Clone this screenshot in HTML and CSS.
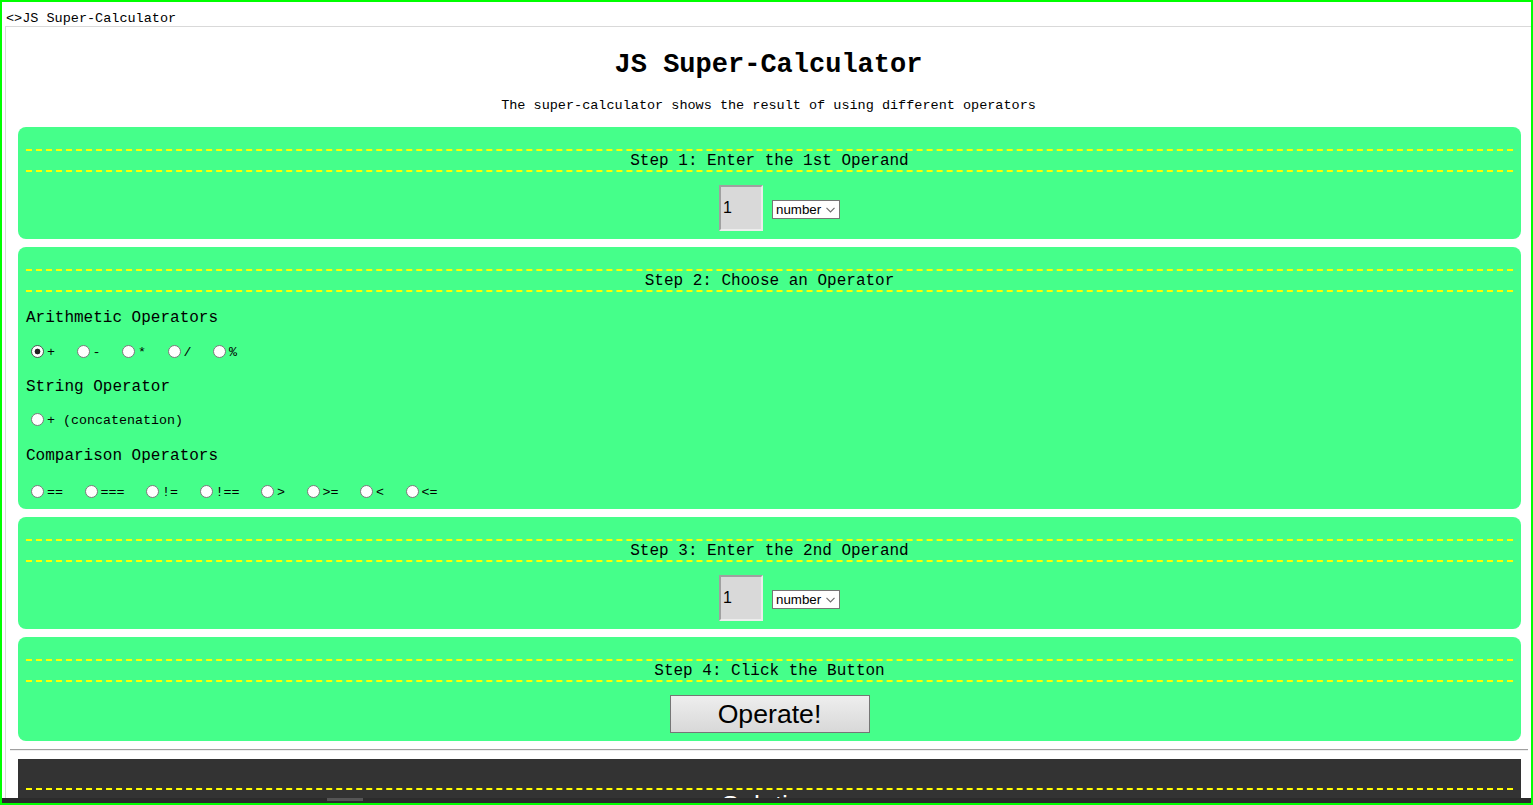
FILE: index.html
```html
<!DOCTYPE html>
<html>
<head>
<meta charset="utf-8">
<title>JS Super-Calculator</title>
<link rel="stylesheet" href="styles.css">
</head>
<body>
<div class="window">
  <div class="titlebar">&lt;&gt;JS Super-Calculator</div>
  <div class="frame">
    <h1 class="title">JS Super-Calculator</h1>
    <p class="subtitle">The super-calculator shows the result of using different operators</p>
    <div class="panels">
      <section class="panel">
        <h2 class="step-title">Step 1: Enter the 1st Operand</h2>
        <div class="operand-row">
          <input class="operand" type="text" value="1">
          <span class="select-wrap">
            <select class="type-select"><option>number</option><option>string</option></select>
            <svg class="chevron" width="9" height="6" viewBox="0 0 9 6"><path d="M0.5 0.8 L4.5 4.8 L8.5 0.8" fill="none" stroke="#6d6d6d" stroke-width="1.2"/></svg>
          </span>
        </div>
      </section>
      <section class="panel">
        <h2 class="step-title">Step 2: Choose an Operator</h2>
        <h3 class="group-title first">Arithmetic Operators</h3>
        <div class="radio-row row-1">
          <label class="opt"><input type="radio" name="op" checked><span>+</span></label>
          <label class="opt"><input type="radio" name="op"><span>-</span></label>
          <label class="opt"><input type="radio" name="op"><span>*</span></label>
          <label class="opt"><input type="radio" name="op"><span>/</span></label>
          <label class="opt"><input type="radio" name="op"><span>%</span></label>
        </div>
        <h3 class="group-title g2">String Operator</h3>
        <div class="radio-row row-2">
          <label class="opt"><input type="radio" name="op"><span>+ (concatenation)</span></label>
        </div>
        <h3 class="group-title g3">Comparison Operators</h3>
        <div class="radio-row row-3">
          <label class="opt"><input type="radio" name="op"><span>==</span></label>
          <label class="opt"><input type="radio" name="op"><span>===</span></label>
          <label class="opt"><input type="radio" name="op"><span>!=</span></label>
          <label class="opt"><input type="radio" name="op"><span>!==</span></label>
          <label class="opt"><input type="radio" name="op"><span>&gt;</span></label>
          <label class="opt"><input type="radio" name="op"><span>&gt;=</span></label>
          <label class="opt"><input type="radio" name="op"><span>&lt;</span></label>
          <label class="opt"><input type="radio" name="op"><span>&lt;=</span></label>
        </div>
      </section>
      <section class="panel">
        <h2 class="step-title">Step 3: Enter the 2nd Operand</h2>
        <div class="operand-row">
          <input class="operand" type="text" value="1">
          <span class="select-wrap">
            <select class="type-select"><option>number</option><option>string</option></select>
            <svg class="chevron" width="9" height="6" viewBox="0 0 9 6"><path d="M0.5 0.8 L4.5 4.8 L8.5 0.8" fill="none" stroke="#6d6d6d" stroke-width="1.2"/></svg>
          </span>
        </div>
      </section>
      <section class="panel">
        <h2 class="step-title">Step 4: Click the Button</h2>
        <div class="button-row">
          <button class="operate" type="button">Operate!</button>
        </div>
      </section>
    </div>
    <hr class="divider">
    <section class="output">
      <h2 class="output-title">Solution</h2>
    </section>
  </div>
  <div class="hscroll"><div class="hscroll-thumb"></div></div>
</div>
</body>
</html>
```
FILE: styles.css
```css
html, body {
  margin: 0;
  padding: 0;
  overflow: hidden;
  background: #fff;
}

.window {
  position: relative;
  width: 1533px;
  height: 805px;
  box-sizing: border-box;
  border: 2px solid #00ff00;
  overflow: hidden;
  background: #fff;
  font-family: "Courier New", "Nimbus Mono PS", "Nimbus Mono L", "FreeMono", "Liberation Mono", monospace;
  color: #000;
}

.titlebar {
  box-sizing: border-box;
  height: 24px;
  padding: 10px 0 0 4px;
  font-size: 13.5px;
  line-height: 14px;
  white-space: nowrap;
}

.frame {
  margin-left: 3px;
  border-top: 1px solid #d9d9d9;
  border-left: 1px solid #d9d9d9;
  height: 800px;
}

.title {
  margin: 23px 0 0;
  font-size: 27px;
  font-weight: bold;
  line-height: 31px;
  text-align: center;
}

.subtitle {
  margin: 17px 0 14px;
  font-size: 13.5px;
  line-height: 15px;
  text-align: center;
}

.panels {
  margin: 0 10px 0 12px;
  display: flex;
  flex-direction: column;
  gap: 8px;
}

.panel {
  background: #45ff8a;
  border-radius: 8px;
  padding: 22px 8px 8px;
}

.step-title {
  margin: 0;
  padding-top: 2px;
  border-top: 2px dashed #ffff00;
  border-bottom: 2px dashed #ffff00;
  font-size: 16px;
  font-weight: normal;
  line-height: 17px;
  text-align: center;
}

.operand-row {
  margin-top: 13px;
  display: flex;
  justify-content: center;
  align-items: center;
  gap: 9px;
  padding-left: 20px;
}

.operand {
  box-sizing: border-box;
  width: 44px;
  height: 46px;
  margin: 0;
  padding: 0 2px;
  border: 2px solid #a0a0a0;
  border-right-color: #ececec;
  border-bottom-color: #ececec;
  background: #d9d9d9;
  font-family: "Liberation Sans", Arial, sans-serif;
  font-size: 16px;
  color: #000;
  outline: none;
}

.select-wrap {
  position: relative;
  display: inline-block;
  margin-top: 2px;
}

.type-select {
  -webkit-appearance: none;
  appearance: none;
  box-sizing: border-box;
  display: block;
  width: 68px;
  height: 19px;
  margin: 0;
  padding: 0 0 0 3px;
  font-family: "Liberation Sans", Arial, sans-serif;
  font-size: 13.33px;
  line-height: 17px;
  background: #fff;
  border: 1px solid #767676;
  border-radius: 0;
  color: #000;
}

.chevron {
  position: absolute;
  right: 5px;
  top: 7px;
  pointer-events: none;
}

.group-title {
  margin: 0;
  font-size: 16px;
  font-weight: normal;
  line-height: 18px;
}

.group-title.first { margin-top: 17px; }
.group-title.g2 { margin-top: 17px; }
.group-title.g3 { margin-top: 18px; }

.radio-row {
  display: flex;
  align-items: center;
  height: 20px;
  font-size: 13.33px;
}

.row-1 { margin-top: 14px; }
.row-2 { margin-top: 13px; }
.row-3 { margin-top: 16px; }

.opt {
  display: flex;
  align-items: center;
  margin-right: 16.5px;
  white-space: pre;
}

.opt input {
  -webkit-appearance: none;
  appearance: none;
  box-sizing: border-box;
  width: 13px;
  height: 13px;
  margin: 0 3px 0 5px;
  border: 1px solid #7a7a7a;
  border-radius: 50%;
  background: #fff;
}

.opt input:checked {
  background: radial-gradient(circle, #222 0, #222 2.6px, #fff 3.2px);
  border-color: #555;
}

.opt span {
  line-height: 16px;
  padding-top: 4px;
}

.button-row {
  margin-top: 13px;
  display: flex;
  justify-content: center;
}

.operate {
  box-sizing: border-box;
  width: 200px;
  height: 38px;
  margin: 0;
  padding: 0;
  border: 1px solid #767676;
  border-radius: 0;
  background: linear-gradient(to bottom, #eeeeee, #d8d8d8);
  font-family: "Liberation Sans", Arial, sans-serif;
  font-size: 26.67px;
  color: #000;
}

.divider {
  margin: 8px 3px 0 4px;
  height: 0;
  border: 0;
  border-top: 1px solid #a0a0a0;
  border-bottom: 1px solid #eeeeee;
}

.output {
  margin: 8px 10px 0 12px;
  background: #333333;
  padding: 29px 8px 8px;
}

.output-title {
  margin: 0;
  border-top: 2px dashed #ffff00;
  border-bottom: 2px dashed #ffff00;
  font-family: "Liberation Sans", Arial, sans-serif;
  font-size: 26.67px;
  font-weight: normal;
  color: #fff;
  text-align: center;
}

.hscroll {
  position: absolute;
  left: 0;
  right: 0;
  bottom: 0;
  height: 5px;
  background: #2b2b2b;
}

.hscroll-thumb {
  position: absolute;
  left: 325px;
  top: 0;
  width: 36px;
  height: 3px;
  background: #555555;
}
```
